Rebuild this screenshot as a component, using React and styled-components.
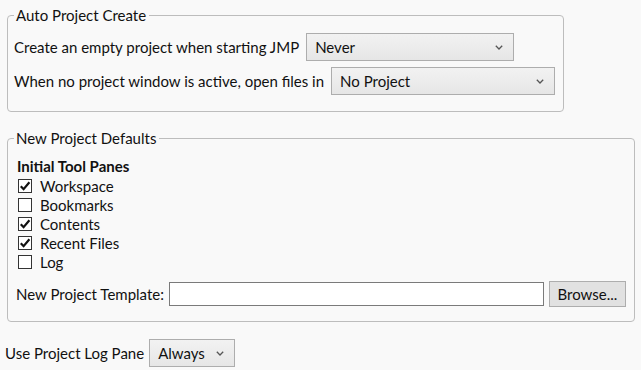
import React from 'react';
import styled, { createGlobalStyle } from 'styled-components';

const Global = createGlobalStyle`
  html, body { margin: 0; padding: 0; background: #f9f9f9; }
  body { font-family: Lato, "Noto Sans", sans-serif; font-size: 15px; color: #111; }
`

const Page = styled.div`
  padding: 5px 5px 0 5px;
  display: flex;
  flex-direction: column;
  align-items: flex-start;
`

const Group = styled.fieldset`
  margin: ${p => p.$top || 0}px 0 0 2px;
  padding: ${p => p.$pad};
  width: ${p => p.$w}px;
  box-sizing: border-box;
  border: 1px solid #bdbdbd;
  border-radius: 4px;
  min-width: 0;
`

const Legend = styled.legend`
  margin-left: ${p => p.$shift || 0}px;
  padding: 0 3px 0 2px;
  line-height: 20px;
  height: 20px;
`

const Row = styled.div`
  display: flex;
  align-items: center;
  gap: ${p => p.$gap || 7}px;
  height: 28px;
  white-space: nowrap;
`

const Rows = styled.div`
  display: flex;
  flex-direction: column;
  gap: 6px;
`

const DropBox = styled.div`
  box-sizing: border-box;
  width: ${p => p.$w}px;
  height: 28px;
  display: flex;
  align-items: center;
  justify-content: space-between;
  padding: 0 10px 0 8px;
  border: 1px solid #adadad;
  background: linear-gradient(#f2f2f2, #e6e6e6);
  color: #111;
`

const Chevron = () => (
  <svg width="8" height="5" viewBox="0 0 8 5">
    <path d="M0.8 0.8 L4 4 L7.2 0.8" fill="none" stroke="#555" strokeWidth="1.3" />
  </svg>
)

function Dropdown({ value, w }) {
  return (
    <DropBox $w={w}>
      <span>{value}</span>
      <Chevron />
    </DropBox>
  )
}

const Heading = styled.div`
  font-weight: 700;
  line-height: 19px;
  padding-left: 1px;
`

const CheckRow = styled.label`
  display: flex;
  align-items: center;
  gap: 8px;
  height: 19px;
  padding-left: 2px;
`

const Box = styled.span`
  box-sizing: border-box;
  width: 14px;
  height: 14px;
  border: 1px solid #333;
  background: #fff;
  display: flex;
  align-items: center;
  justify-content: center;
`

function Check({ on, children }) {
  return (
    <CheckRow>
      <Box>
        {on && (
          <svg width="12" height="12" viewBox="0 0 12 12">
            <path d="M1.8 6.2 L4.6 9.2 L10.4 2.2" fill="none" stroke="#111" strokeWidth="2.2" />
          </svg>
        )}
      </Box>
      {children}
    </CheckRow>
  )
}

const TemplateRow = styled.div`
  display: flex;
  align-items: center;
  margin-top: 10px;
  height: 26px;
  white-space: nowrap;
`

const TextInput = styled.div`
  box-sizing: border-box;
  width: 375px;
  height: 24px;
  margin-left: 5px;
  background: #fff;
  border: 1px solid #7a7a7a;
`

const Button = styled.div`
  box-sizing: border-box;
  width: 77px;
  height: 26px;
  margin-left: 5px;
  display: flex;
  align-items: center;
  justify-content: center;
  background: #e1e1e1;
  border: 1px solid #adadad;
`

const Bottom = styled(Row)`
  margin-top: 17px;
  gap: 5px;
`

export default function App() {
  return (
    <>
      <Global />
      <Page>
        <Group $w={557} $pad="8px 6px 16px 6px">
          <Legend>Auto Project Create</Legend>
          <Rows>
            <Row>
              <span>Create an empty project when starting JMP</span>
              <Dropdown value="Never" w={208} />
            </Row>
            <Row>
              <span>When no project window is active, open files in</span>
              <Dropdown value="No Project" w={224} />
            </Row>
          </Rows>
        </Group>
        <Group $w={628} $pad="9px 8px 14px 8px" $top={16}>
          <Legend $shift={-2}>New Project Defaults</Legend>
          <Heading>Initial Tool Panes</Heading>
          <Check on>Workspace</Check>
          <Check>Bookmarks</Check>
          <Check on>Contents</Check>
          <Check on>Recent Files</Check>
          <Check>Log</Check>
          <TemplateRow>
            <span>New Project Template:</span>
            <TextInput />
            <Button>Browse...</Button>
          </TemplateRow>
        </Group>
        <Bottom>
          <span>Use Project Log Pane</span>
          <Dropdown value="Always" w={86} />
        </Bottom>
      </Page>
    </>
  )
}
